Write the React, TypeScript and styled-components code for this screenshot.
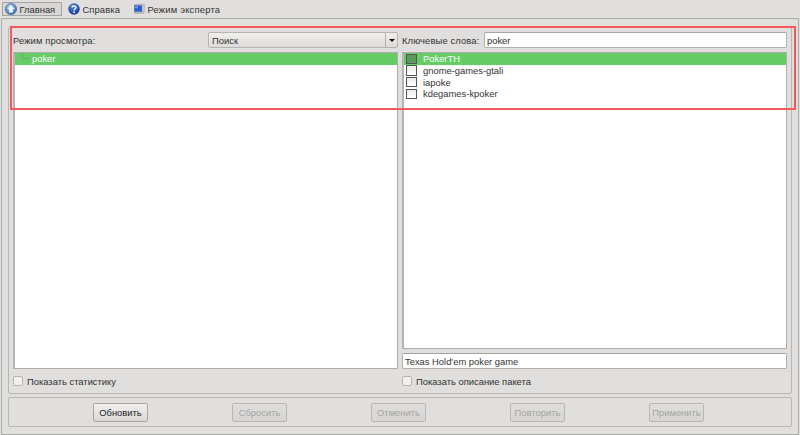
import React from "react";
import styled, { createGlobalStyle } from "styled-components";

const Global = createGlobalStyle`
  html, body { margin: 0; padding: 0; background: #e0dfdd; }
  #root { width: 800px; height: 435px; }
`;

const Window = styled.div`
  position: relative;
  width: 800px;
  height: 435px;
  box-sizing: border-box;
  display: flex;
  flex-direction: column;
  background: #e0dfdd;
  overflow: hidden;
  font-family: "Liberation Sans", Arial, sans-serif;
  font-size: 9.4px;
  color: #333;
`;

const Toolbar = styled.div`
  height: 18px;
  box-sizing: border-box;
  padding: 2px 0 0 2px;
  display: flex;
  align-items: flex-start;
  gap: 3px;
`;

const ToolButton = styled.div<{ $active?: boolean; $w: number; $spacing?: number }>`
  width: ${(p) => p.$w}px;
  height: 14px;
  box-sizing: border-box;
  display: flex;
  align-items: center;
  gap: 2.5px;
  padding-left: 2px;
  border: 1px solid ${(p) => (p.$active ? "#a5a4a2" : "transparent")};
  background: ${(p) => (p.$active ? "#d8d7d5" : "transparent")};
  white-space: nowrap;
  letter-spacing: ${(p) => p.$spacing ?? 0}px;
  svg {
    flex: none;
  }
`;

const Pane = styled.div`
  flex: 1;
  margin: 0 1px 0 1px;
  border: 1px solid #ababa9;
  box-sizing: border-box;
  padding: 8px 6px 7px 6px;
  display: flex;
  flex-direction: column;
  gap: 3px;
  min-height: 0;
`;

const Group = styled.div`
  flex: 1;
  border: 1px solid #b8b7b5;
  border-radius: 2px;
  box-sizing: border-box;
  padding: 4px 4px 7px 4px;
  display: grid;
  grid-template-columns: 385px 385px;
  column-gap: 4px;
  min-height: 0;
`;

const Column = styled.div`
  display: flex;
  flex-direction: column;
  min-height: 0;
  min-width: 0;
`;

const FilterRow = styled.div`
  height: 16px;
  flex: none;
  display: flex;
  align-items: center;
  justify-content: space-between;
  margin-bottom: 4px;
`;

const Label = styled.span`
  white-space: nowrap;
  letter-spacing: 0.12px;
`;

const Combo = styled.div`
  width: 190px;
  height: 16px;
  box-sizing: border-box;
  border: 1px solid #b5b4b2;
  border-radius: 2px;
  background: linear-gradient(#f0efed, #dcdbd9);
  display: flex;
  align-items: center;
  padding-left: 3px;
`;

const ComboText = styled.span`
  flex: 1;
`;

const ComboArrow = styled.div`
  width: 11px;
  height: 14px;
  border-left: 1px solid #b5b4b2;
  display: flex;
  align-items: center;
  justify-content: center;
  &::after {
    content: "";
    border: 3px solid transparent;
    border-top: 3.5px solid #111;
    border-bottom: 0;
  }
`;

const KeywordRow = styled(FilterRow)``;

const Input = styled.div`
  width: 303px;
  height: 16px;
  box-sizing: border-box;
  background: #fff;
  border: 1px solid #b0afad;
  border-top-color: #a6a5a3;
  border-radius: 2px;
  display: flex;
  align-items: center;
  padding-left: 2px;
  white-space: nowrap;
`;

const ListBox = styled.div`
  flex: 1;
  min-height: 0;
  box-sizing: border-box;
  background: #fff;
  border: 1px solid #aeadab;
  border-left: 2px solid #b5b4b2;
  display: flex;
  flex-direction: column;
`;

const TreeRow = styled.div`
  height: 11.7px;
  flex: none;
  background: #66cd66;
  color: #fff;
  display: flex;
  align-items: center;
  padding-left: 7px;
  gap: 2px;
`;

const TreeElbow = styled.span`
  width: 8px;
  height: 6px;
  flex: none;
  align-self: flex-start;
  border-left: 1px solid #6fa86f;
  border-bottom: 1px solid #6fa86f;
  box-sizing: border-box;
`;

const PackageRow = styled.div<{ $selected?: boolean }>`
  height: 11.7px;
  flex: none;
  display: flex;
  align-items: center;
  gap: 6px;
  padding-left: 2px;
  background: ${(p) => (p.$selected ? "#66cd66" : "transparent")};
  color: ${(p) => (p.$selected ? "#fff" : "#333")};
`;

const PackageBox = styled.span<{ $selected?: boolean }>`
  width: 11px;
  height: 10.5px;
  flex: none;
  box-sizing: border-box;
  border: 1px solid #555;
  background: ${(p) => (p.$selected ? "#5c9a5c" : "linear-gradient(#ececea, #fff)")};
`;

const Description = styled(Input)`
  width: auto;
  flex: none;
  margin-top: 4px;
`;

const CheckRow = styled.label`
  height: 10px;
  flex: none;
  margin-top: 7px;
  display: flex;
  align-items: center;
  gap: 4px;
`;

const CheckBox = styled.span`
  width: 10px;
  height: 10px;
  flex: none;
  box-sizing: border-box;
  border: 1px solid #b5b4b2;
  border-radius: 2px;
  background: #f2f1ef;
`;

const ButtonBar = styled.div`
  height: 30px;
  flex: none;
  box-sizing: border-box;
  border: 1px solid #b8b7b5;
  border-radius: 2px;
  padding: 5px 0 0 84px;
  display: flex;
  align-items: flex-start;
  gap: 84px;
`;

const Button = styled.div<{ $disabled?: boolean }>`
  width: 55px;
  height: 19px;
  box-sizing: border-box;
  border: 1px solid ${(p) => (p.$disabled ? "#b8b7b5" : "#a8a7a5")};
  border-radius: 2px;
  background: ${(p) =>
    p.$disabled ? "linear-gradient(#dfdedc, #d6d5d3)" : "linear-gradient(#f1f0ee, #d9d8d6)"};
  color: ${(p) => (p.$disabled ? "#a5a4a2" : "#222")};
  display: flex;
  align-items: center;
  justify-content: center;
`;

const Highlight = styled.div`
  position: absolute;
  left: 10px;
  top: 26px;
  width: 786px;
  height: 84px;
  box-sizing: border-box;
  border: 2px solid #f25a5e;
  pointer-events: none;
`;

const HomeIcon = () => (
  <svg width="12" height="12" viewBox="0 0 13 13">
    <defs>
      <radialGradient id="homeBlue" cx="0.4" cy="0.3" r="0.8">
        <stop offset="0" stopColor="#a8d0f0" />
        <stop offset="1" stopColor="#2a68b8" />
      </radialGradient>
    </defs>
    <circle cx="6.5" cy="6.5" r="6" fill="url(#homeBlue)" stroke="#2a5a9a" strokeWidth="0.7" />
    <path d="M6.5 2.2 L10.6 6.6 H8.6 V10.4 H4.4 V6.6 H2.4 Z" fill="#eef3f8" />
  </svg>
);

const HelpIcon = () => (
  <svg width="12" height="12" viewBox="0 0 13 13">
    <defs>
      <radialGradient id="helpBlue" cx="0.4" cy="0.3" r="0.8">
        <stop offset="0" stopColor="#4a86e0" />
        <stop offset="1" stopColor="#0e2f8c" />
      </radialGradient>
    </defs>
    <circle cx="6.5" cy="6.5" r="6.2" fill="url(#helpBlue)" />
    <path d="M4.4 5 C4.4 2.6 8.7 2.6 8.7 5 C8.7 6.6 6.6 6.5 6.6 8" fill="none" stroke="#fff" strokeWidth="1.5" />
    <circle cx="6.6" cy="10" r="0.95" fill="#fff" />
  </svg>
);

const ExpertIcon = () => (
  <svg width="12" height="12" viewBox="0 0 14 13">
    <rect x="3" y="1" width="10" height="9" fill="#d4d7dc" stroke="#9a9fa8" strokeWidth="0.8" />
    <rect x="1.5" y="2.5" width="9" height="7" fill="#2a60d0" stroke="#5a6f9a" strokeWidth="0.6" />
    <rect x="2.5" y="3.5" width="3" height="2" fill="#7fa6ee" />
    <path d="M1 11.2 H13" stroke="#a5aab2" strokeWidth="1.4" />
  </svg>
);

export default function App() {
  return (
    <Window>
      <Global />
      <Toolbar>
        <ToolButton $active $w={60}>
          <HomeIcon />
          <span>Главная</span>
        </ToolButton>
        <ToolButton $w={62} $spacing={0.1}>
          <HelpIcon />
          <span>Справка</span>
        </ToolButton>
        <ToolButton $w={92} $spacing={0.2}>
          <ExpertIcon />
          <span>Режим эксперта</span>
        </ToolButton>
      </Toolbar>
      <Pane>
        <Group>
          <Column>
            <FilterRow>
              <Label>Режим просмотра:</Label>
              <Combo>
                <ComboText>Поиск</ComboText>
                <ComboArrow />
              </Combo>
            </FilterRow>
            <ListBox>
              <TreeRow>
                <TreeElbow />
                <span>poker</span>
              </TreeRow>
            </ListBox>
            <CheckRow>
              <CheckBox />
              <span>Показать статистику</span>
            </CheckRow>
          </Column>
          <Column>
            <KeywordRow>
              <Label>Ключевые слова:</Label>
              <Input>poker</Input>
            </KeywordRow>
            <ListBox>
              <PackageRow $selected>
                <PackageBox $selected />
                <span>PokerTH</span>
              </PackageRow>
              <PackageRow>
                <PackageBox />
                <span>gnome-games-gtali</span>
              </PackageRow>
              <PackageRow>
                <PackageBox />
                <span>iapoke</span>
              </PackageRow>
              <PackageRow>
                <PackageBox />
                <span>kdegames-kpoker</span>
              </PackageRow>
            </ListBox>
            <Description>Texas Hold'em poker game</Description>
            <CheckRow>
              <CheckBox />
              <span>Показать описание пакета</span>
            </CheckRow>
          </Column>
        </Group>
        <ButtonBar>
          <Button>Обновить</Button>
          <Button $disabled>Сбросить</Button>
          <Button $disabled>Отменить</Button>
          <Button $disabled>Повторить</Button>
          <Button $disabled>Применить</Button>
        </ButtonBar>
      </Pane>
      <Highlight />
    </Window>
  );
}
